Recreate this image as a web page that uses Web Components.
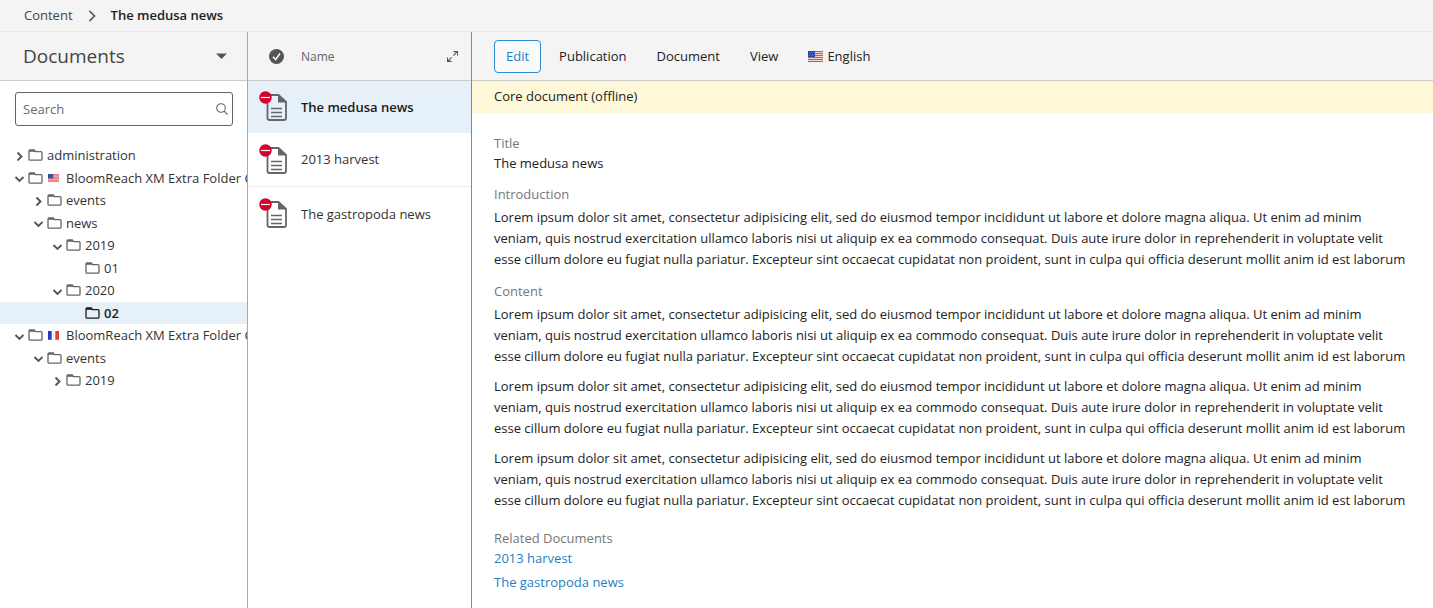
<!DOCTYPE html>
<html lang="en">
<head>
<meta charset="utf-8">
<title>Content – The medusa news</title>
<style>
  html, body { height: 100%; }
  body { margin: 0; background: #fff; color: #222; font: 13px/21px "Open Sans", "Noto Sans", sans-serif; }
</style>
</head>
<body>
<cms-app></cms-app>

<script>
const define = (name, html, setup) => {
  const template = document.createElement('template');
  template.innerHTML = '<style>*, :host { box-sizing: border-box; }</style>' + html;
  customElements.define(name, class extends HTMLElement {
    constructor() {
      super();
      this.attachShadow({ mode: 'open' }).append(template.content.cloneNode(true));
    }
    connectedCallback() { if (setup) setup(this, this.shadowRoot); }
  });
};

define('flag-icon', `
  <style>
    :host { display: inline-flex; flex: none; width: 15px; }
    svg { display: block; width: 100%; }
    .fr { display: none; }
    :host([country="fr"]) .fr { display: block; }
    :host([country="fr"]) .us { display: none; }
  </style>
  <svg class="us" viewBox="0 0 15 11" aria-hidden="true">
    <path fill="#f9d3d0" d="M0 0h15v11H0z"/>
    <path stroke="#ee4840" stroke-width="1" d="M0 .5h15M0 2.5h15M0 4.5h15M0 6.5h15M0 8.5h15M0 10.5h15"/>
    <path fill="#2c46a5" d="M0 0h7v6H0z"/>
    <path stroke="#9fb0e0" stroke-width=".6" stroke-dasharray=".7 1.3" d="M1 1.4h6M2 3h5M1 4.6h6"/>
  </svg>
  <svg class="fr" viewBox="0 0 15 12" aria-hidden="true">
    <path fill="#f4f4f8" d="M0 0h15v12H0z"/>
    <path fill="#1d3fc0" d="M0 0h5v12H0z"/>
    <path fill="#ee3a2f" d="M10 0h5v12h-5z"/>
  </svg>`);

define('crumb-bar', `
  <style>
    :host { display: block; background: #f4f4f4; border-bottom: 1px solid #e6e6e6; }
    nav { display: flex; align-items: center; height: 31px; padding: 0 24px; }
    a { color: #444; text-decoration: none; }
    svg { width: 8px; margin: 0 15px; }
    b { font-weight: 600; }
  </style>
  <nav aria-label="Breadcrumb">
    <a href="#content">Content</a>
    <svg viewBox="0 0 8 12" fill="none" stroke="#555" stroke-width="1.7" aria-hidden="true"><path d="M1.5 1 6.5 6l-5 5"/></svg>
    <b><slot></slot></b>
  </nav>`);

define('tree-item', `
  <style>
    :host { display: flex; align-items: center; height: 22px; padding-left: calc(14px + 19px * var(--level, 0)); white-space: nowrap; color: #333; }
    :host([tall]) { height: 23px; }
    .arrow { flex: none; width: 10px; height: 10px; margin-right: 4px; fill: none; stroke: #555; stroke-width: 1.9; }
    .arrow path { display: none; }
    :host([state="closed"]) .shut, :host([state="open"]) .down { display: block; }
    .folder { flex: none; width: 15px; height: 12px; margin: 0 4px 1px 0; fill: none; stroke: #666; stroke-width: 1.3; }
    :host([selected]) { background: #e5f0f9; color: #1a1a1a; font-weight: 600; }
    :host([selected]) .folder { stroke: #1a1a1a; }
    flag-icon { width: 11px; margin: 0 7px 0 1px; }
    flag-icon[hidden] { display: none; }
  </style>
  <svg class="arrow" viewBox="0 0 10 10" aria-hidden="true"><path class="shut" d="M3.5 1.5 7.5 5.5l-4 4"/><path class="down" d="M1.500 4l4 4 4-4"/></svg>
  <svg class="folder" viewBox="0 0 15 12" aria-hidden="true"><path d="M1 2.5V10.2q0 1 1 1h11q1 0 1-1V3.6q0-1-1-1H7.5L6.3.9H2Q1 .9 1 1.9z"/><path d="M1 1.9h6" stroke-width="1.8"/></svg>
  <flag-icon hidden></flag-icon>
  <slot></slot>`,
  (host, root) => {
    host.setAttribute('role', 'treeitem');
    host.style.setProperty('--level', host.getAttribute('level') || 0);
    const country = host.getAttribute('country');
    if (country) {
      const flag = root.querySelector('flag-icon');
      flag.setAttribute('country', country);
      flag.hidden = false;
    }
  });

define('document-tree', `
  <style>
    :host { display: block; overflow: hidden; background: #fff; border-right: 1px solid #a8a8a8; }
    header { display: flex; align-items: center; justify-content: space-between; height: 49px; padding: 0 20px 0 23px; background: #f4f4f4; border-bottom: 1px solid #ccc; }
    h2 { margin: 0; font-size: 19px; font-weight: 400; color: #444; }
    button { display: flex; border: 0; padding: 0; background: none; }
    label { display: flex; align-items: center; height: 34px; margin: 11px 14px 18px 15px; padding: 0 4px 0 7px; border: 1px solid #666; border-radius: 3px; }
    input { flex: 1; min-width: 0; height: 21px; border: 0; padding: 0; outline: 0; background: none; font: inherit; color: #333; }
    input::placeholder { color: #6b6b6b; opacity: 1; }
  </style>
  <header>
    <h2>Documents</h2>
    <button type="button" aria-label="Choose section"><svg width="11" height="6" viewBox="0 0 11 6" aria-hidden="true"><path d="M0 .5h11L5.500 6z" fill="#555"/></svg></button>
  </header>
  <label>
    <input type="text" placeholder="Search" aria-label="Search">
    <svg width="12" height="12" viewBox="0 0 12 12" fill="none" stroke="#666" stroke-width="1.1" aria-hidden="true"><circle cx="5" cy="5" r="4.300"/><path d="M8.200 8.200 11.500 11.500"/></svg>
  </label>
  <div role="tree" aria-label="Documents">
    <tree-item level="0" state="closed" tall>administration</tree-item>
    <tree-item level="0" state="open" country="us">BloomReach XM Extra Folder C</tree-item>
    <tree-item level="1" state="closed" tall>events</tree-item>
    <tree-item level="1" state="open">news</tree-item>
    <tree-item level="2" state="open" tall>2019</tree-item>
    <tree-item level="3">01</tree-item>
    <tree-item level="2" state="open" tall>2020</tree-item>
    <tree-item level="3" selected>02</tree-item>
    <tree-item level="0" state="open" country="fr" tall>BloomReach XM Extra Folder C</tree-item>
    <tree-item level="1" state="open">events</tree-item>
    <tree-item level="2" state="closed" tall>2019</tree-item>
  </div>`);

define('document-row', `
  <style>
    :host { display: flex; align-items: center; height: 54px; padding-left: 11px; border-bottom: 1px solid #ececec; color: #333; }
    :host([selected]) { height: 52px; border: 0; background: #e5f0f9; color: #1a1a1a; font-weight: 600; }
    :host(:last-of-type) { border: 0; }
    svg { flex: none; width: 28px; height: 30px; margin: 0 14px 2px 0; }
  </style>
  <svg viewBox="0 0 28 30" aria-hidden="true">
    <path d="M10.500 4H19.500L27 11V27q0 2-2 2H10.500q-2 0-2-2V6q0-2 2-2z" fill="none" stroke="#666" stroke-width="1.800"/>
    <path d="M19 3.500V11.500H27.500z" fill="#666"/>
    <path d="M12 17.500H23M12 21.500H23M12 25.500H23" stroke="#666" stroke-width="1.300"/>
    <circle cx="6.500" cy="6.500" r="6.200" fill="#d5002b"/>
    <path d="M2 6.500H11" stroke="#fff" stroke-width="1.200"/>
  </svg>
  <slot></slot>`);

define('document-list', `
  <style>
    :host { display: block; background: #fff; border-right: 1px solid #888; }
    header { display: flex; align-items: center; height: 49px; padding: 0 13px 0 21px; background: #f4f4f4; border-bottom: 1px solid #ccc; font-size: 12px; color: #666; }
    span { flex: 1; margin-left: 17px; }
    button { display: flex; border: 0; padding: 0; background: none; }
  </style>
  <header>
    <button type="button" aria-label="Select documents"><svg width="15" height="15" viewBox="0 0 15 15" aria-hidden="true"><circle cx="7.500" cy="7.500" r="7.500" fill="#555"/><path d="M4 7.800 6.600 10.600 11 4.500" fill="none" stroke="#fff" stroke-width="1.500"/></svg></button>
    <span>Name</span>
    <button type="button" aria-label="Expand"><svg width="11" height="11" viewBox="0 0 11 11" fill="none" stroke="#555" stroke-width="1.100" aria-hidden="true"><path d="M6.500.6h4v4M10.400.6 6.400 4.600M4.500 10.400h-4v-4M.6 10.400l4-4"/></svg></button>
  </header>
  <document-row selected>The medusa news</document-row>
  <document-row>2013 harvest</document-row>
  <document-row>The gastropoda news</document-row>`);

define('menu-button', `
  <style>
    :host { display: block; }
    button { display: flex; align-items: center; gap: 4px; height: 33px; border: 1px solid transparent; border-radius: 4px; padding: 0 11px; background: none; font: inherit; color: #222; }
    :host([primary]) button { border-color: #2b8ad0; background: #fafafa; color: #1f7fc4; }
  </style>
  <button type="button"><slot></slot></button>`);

define('doc-field', `
  <style>
    :host { display: block; }
    h3 { margin: 0; font-size: 13px; line-height: 20px; font-weight: 400; color: #777; }
    div { display: flex; flex-direction: column; gap: var(--gap, 0); padding-top: var(--lead, 0); }
  </style>
  <h3><slot name="label"></slot></h3>
  <div><slot></slot></div>`);

const lorem = 'Lorem ipsum dolor sit amet, consectetur adipisicing elit, sed do eiusmod tempor incididunt ut labore et dolore magna aliqua. Ut enim ad minim veniam, quis nostrud exercitation ullamco laboris nisi ut aliquip ex ea commodo consequat. Duis aute irure dolor in reprehenderit in voluptate velit esse cillum dolore eu fugiat nulla pariatur. Excepteur sint occaecat cupidatat non proident, sunt in culpa qui officia deserunt mollit anim id est laborum';

define('document-view', `
  <style>
    :host { display: block; min-width: 0; background: #fff; }
    header { display: flex; align-items: center; gap: 6px; height: 49px; padding: 0 22px; background: #f4f4f4; border-bottom: 1px solid #ccc; }
    .status { margin: 0; padding: 5px 22px 6px; background: #fff9da; }
    main { display: flex; flex-direction: column; gap: 11px; padding: 20px 24px 12px 22px; }
    p { margin: 0; }
    .title { line-height: 20px; }
    .text { --lead: 3px; --gap: 9px; }
    .related { --gap: 3px; margin-top: 6px; }
    a { color: #1f7fc4; text-decoration: none; }
  </style>
  <header>
    <menu-button primary>Edit</menu-button>
    <menu-button>Publication</menu-button>
    <menu-button>Document</menu-button>
    <menu-button>View</menu-button>
    <menu-button><flag-icon></flag-icon>English</menu-button>
  </header>
  <p class="status">Core document (offline)</p>
  <main>
    <doc-field class="title"><span slot="label">Title</span><p>The medusa news</p></doc-field>
    <doc-field class="text"><span slot="label">Introduction</span><p>${lorem}</p></doc-field>
    <doc-field class="text"><span slot="label">Content</span><p>${lorem}</p><p>${lorem}</p><p>${lorem}</p></doc-field>
    <doc-field class="related"><span slot="label">Related Documents</span><a href="#harvest">2013 harvest</a><a href="#gastropoda">The gastropoda news</a></doc-field>
  </main>`);

define('cms-app', `
  <style>
    :host { display: flex; flex-direction: column; min-height: 100vh; }
    .panes { flex: 1; display: grid; grid-template-columns: 248px 224px minmax(0, 1fr); }
  </style>
  <crumb-bar>The medusa news</crumb-bar>
  <div class="panes">
    <document-tree></document-tree>
    <document-list></document-list>
    <document-view></document-view>
  </div>`);
</script>
</body>
</html>
